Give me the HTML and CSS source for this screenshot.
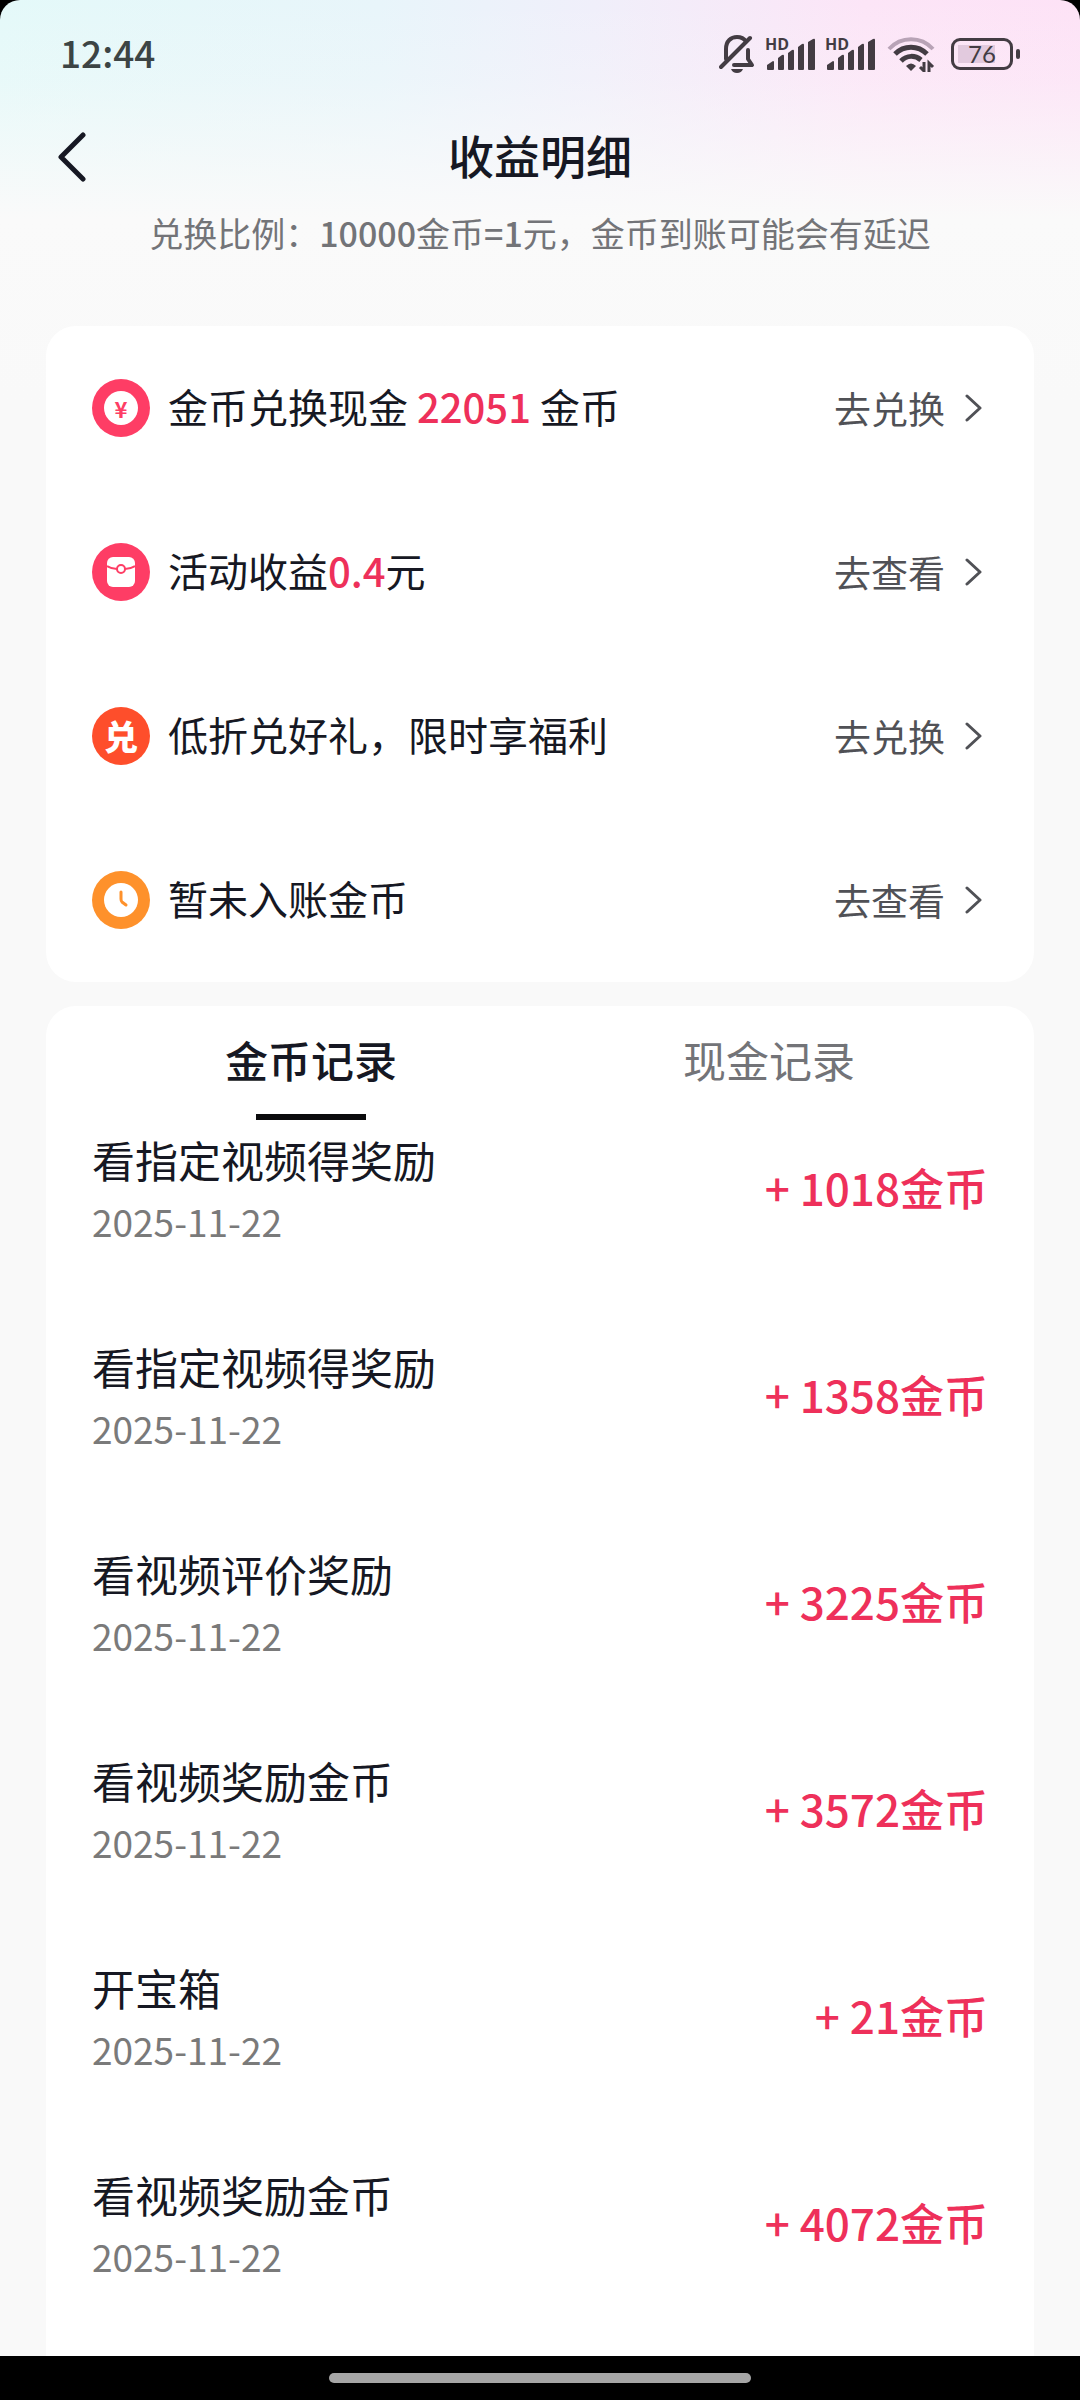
FILE: index.html
```html
<!DOCTYPE html>
<html lang="zh-CN">
<head>
    <meta charset="UTF-8">
    <meta name="viewport" content="width=device-width, initial-scale=1.0">
    <title>收益明细</title>
    <link rel="stylesheet" href="styles.css">
</head>
<body>
    <div class="screen">
        <div class="status-bar">
            <span class="time">12:44</span>
            <div class="status-icons">
                <svg class="bell" width="36" height="38" viewBox="0 0 36 38" fill="none" stroke="#433c43" stroke-width="4" stroke-linecap="round">
                    <path d="M7 24V14C7 6 12 2 18 2c4 0 7 1.500 9 4.500M29 15v9l4 6H15" stroke-linejoin="round"/>
                    <path d="M2 32L31 3"/>
                    <path d="M12 34h12c-1 2.500-3 4-6 4s-5-1.500-6-4z" fill="#433c43" stroke="none"/>
                </svg>
                <div class="signal">
                    <span class="hd">HD</span>
                    <svg width="48" height="32" viewBox="0 0 48 32" fill="#433c43">
                        <path d="M0 27l6-4q1 0 1 1v7q0 1-1 1H1q-1 0-1-1zM11 20l4-3q2-1 2 1v13q0 1-1 1h-4q-1 0-1-1zM21 15l4-3q2-1 2 1v18q0 1-1 1h-4q-1 0-1-1zM31 9l4-3q2-1 2 1v24q0 1-1 1h-4q-1 0-1-1zM41 4l5-3q2-1 2 1v29q0 1-1 1h-5q-1 0-1-1z"/>
                    </svg>
                </div>
                <div class="signal">
                    <span class="hd">HD</span>
                    <svg width="48" height="32" viewBox="0 0 48 32" fill="#433c43">
                        <path d="M0 27l6-4q1 0 1 1v7q0 1-1 1H1q-1 0-1-1zM11 20l4-3q2-1 2 1v13q0 1-1 1h-4q-1 0-1-1zM21 15l4-3q2-1 2 1v18q0 1-1 1h-4q-1 0-1-1zM31 9l4-3q2-1 2 1v24q0 1-1 1h-4q-1 0-1-1zM41 4l5-3q2-1 2 1v29q0 1-1 1h-5q-1 0-1-1z"/>
                    </svg>
                </div>
                <svg class="wifi" width="48" height="36" viewBox="0 0 48 36" fill="none" stroke="#433c43" stroke-width="5">
                    <path d="M2 13C14 0 34 0 46 13" stroke="#b8a3b6" stroke-width="4"/>
                    <path d="M8 18C17 9 31 9 40 18"/>
                    <path d="M14 25C20 19 28 19 34 24"/>
                    <path d="M19 30q5-5 10 0l-5 5z" fill="#433c43" stroke="none"/>
                    <path d="M37 26v9l-4-4M42 36v-9l4 4" stroke-width="3"/>
                </svg>
                <div class="battery"><span class="battery-body">76</span></div>
            </div>
        </div>

        <header class="header">
            <button class="back" type="button" aria-label="返回">
                <svg width="28" height="50" viewBox="0 0 28 50" fill="none" stroke="#161823" stroke-width="5" stroke-linecap="round" stroke-linejoin="round">
                    <path d="M25 3L3 25l22 22"/>
                </svg>
            </button>
            <h1>收益明细</h1>
        </header>
        <p class="rate">兑换比例：<b>10000</b>金币<b>=1</b>元，金币到账可能会有延迟</p>

        <section class="card">
            <div class="entry">
                <span class="icon pink"><span class="coin">¥</span></span>
                <span class="label">金币兑换现金 <em>22051</em> 金币</span>
                <a class="action" href="#">去兑换
                    <svg width="17" height="28" viewBox="0 0 17 28"><path d="M2 2l13 12L2 26"/></svg>
                </a>
            </div>
            <div class="entry">
                <span class="icon pink">
                    <svg width="28" height="30" viewBox="0 0 28 30">
                        <rect width="28" height="30" rx="6" fill="#fff"/>
                        <path d="M0 9q5 3 10 3M18 12q5 0 10-3" fill="none" stroke="#fe3d65" stroke-width="2"/>
                        <circle cx="14" cy="12" r="4" fill="#fff" stroke="#fe3d65" stroke-width="2"/>
                    </svg>
                </span>
                <span class="label">活动收益<em>0.4</em>元</span>
                <a class="action" href="#">去查看
                    <svg width="17" height="28" viewBox="0 0 17 28"><path d="M2 2l13 12L2 26"/></svg>
                </a>
            </div>
            <div class="entry">
                <span class="icon red">兑</span>
                <span class="label">低折兑好礼，限时享福利</span>
                <a class="action" href="#">去兑换
                    <svg width="17" height="28" viewBox="0 0 17 28"><path d="M2 2l13 12L2 26"/></svg>
                </a>
            </div>
            <div class="entry">
                <span class="icon orange">
                    <svg width="34" height="34" viewBox="0 0 34 34">
                        <circle cx="17" cy="17" r="17" fill="#fff"/>
                        <path d="M17 9v7q0 2 1 3l4 3" fill="none" stroke="#fe912b" stroke-width="3" stroke-linecap="round"/>
                    </svg>
                </span>
                <span class="label">暂未入账金币</span>
                <a class="action" href="#">去查看
                    <svg width="17" height="28" viewBox="0 0 17 28"><path d="M2 2l13 12L2 26"/></svg>
                </a>
            </div>
        </section>

        <section class="card records">
            <div class="tabs">
                <button class="tab active" type="button">金币记录</button>
                <button class="tab" type="button">现金记录</button>
            </div>
            <ul class="list">
                <li class="record">
                    <div>
                        <div class="name">看指定视频得奖励</div>
                        <div class="date">2025-11-22</div>
                    </div>
                    <span class="amount">+ 1018金币</span>
                </li>
                <li class="record">
                    <div>
                        <div class="name">看指定视频得奖励</div>
                        <div class="date">2025-11-22</div>
                    </div>
                    <span class="amount">+ 1358金币</span>
                </li>
                <li class="record">
                    <div>
                        <div class="name">看视频评价奖励</div>
                        <div class="date">2025-11-22</div>
                    </div>
                    <span class="amount">+ 3225金币</span>
                </li>
                <li class="record">
                    <div>
                        <div class="name">看视频奖励金币</div>
                        <div class="date">2025-11-22</div>
                    </div>
                    <span class="amount">+ 3572金币</span>
                </li>
                <li class="record">
                    <div>
                        <div class="name">开宝箱</div>
                        <div class="date">2025-11-22</div>
                    </div>
                    <span class="amount">+ 21金币</span>
                </li>
                <li class="record">
                    <div>
                        <div class="name">看视频奖励金币</div>
                        <div class="date">2025-11-22</div>
                    </div>
                    <span class="amount">+ 4072金币</span>
                </li>
            </ul>
        </section>
    </div>
    <div class="nav-bar"><div class="handle"></div></div>
</body>
</html>
```
FILE: styles.css
```css
* {
    box-sizing: border-box;
}

body {
    margin: 0;
    min-height: 100vh;
    display: flex;
    flex-direction: column;
    background-color: #000;
    color: #161823;
    font-family: "Noto Sans CJK SC", sans-serif;
}

button {
    padding: 0;
    border: none;
    background: none;
    color: inherit;
    font: inherit;
}

.screen {
    flex: 1;
    display: flex;
    flex-direction: column;
    border-radius: 20px 20px 0 0;
    background:
        linear-gradient(to bottom, rgba(250, 250, 250, 0) 0, rgba(250, 250, 250, 0.2) 80px, #fafafa 220px, #f9f9f9 400px),
        linear-gradient(to right, #e4f9f9 0%, #e8f5fa 35%, #f0effa 55%, #fce5f7 80%, #fde2f6 100%);
}

/* status bar */
.status-bar {
    display: flex;
    justify-content: space-between;
    align-items: center;
    height: 108px;
    padding: 0 60px;
}

.time {
    padding-bottom: 4px;
    font-size: 37px;
    font-weight: 500;
    color: #3c4444;
}

.status-icons {
    display: flex;
    align-items: center;
    gap: 12px;
}

.signal {
    position: relative;
    display: flex;
}

.hd {
    position: absolute;
    top: -4px;
    left: -2px;
    font-family: "Open Sans", sans-serif;
    font-size: 16px;
    font-weight: 700;
    line-height: 20px;
    color: #433c43;
}

.battery {
    display: flex;
    align-items: center;
    gap: 3px;
    margin-left: 4px;
}

.battery-body {
    width: 62px;
    height: 32px;
    border: 3px solid #433c43;
    border-radius: 9px;
    background: linear-gradient(#e2cade, #e2cade) 4px center / 37px 18px no-repeat;
    font-family: Lato, sans-serif;
    font-size: 24px;
    line-height: 26px;
    text-align: center;
    color: #433c43;
}

.battery::after {
    content: "";
    width: 4px;
    height: 10px;
    border-radius: 2px;
    background-color: #433c43;
}

/* title */
.header {
    display: grid;
    grid-template-columns: 28px 1fr 28px;
    align-items: center;
    height: 98px;
    padding: 0 58px;
}

.back {
    display: flex;
}

h1 {
    margin: 0;
    padding-bottom: 6px;
    font-size: 46px;
    font-weight: 500;
    line-height: 64px;
    text-align: center;
}

.rate {
    margin: 0 0 66px;
    font-size: 34px;
    line-height: 54px;
    text-align: center;
    color: #737478;
}

.rate b {
    font-weight: 500;
}

/* cards */
.card {
    margin: 0 46px 24px;
    border-radius: 30px;
    background-color: #fff;
}

.entry {
    display: flex;
    align-items: center;
    height: 164px;
    padding: 0 52px 0 46px;
}

.icon {
    display: flex;
    justify-content: center;
    align-items: center;
    width: 58px;
    height: 58px;
    margin-right: 18px;
    border-radius: 50%;
    color: #fff;
    font-size: 34px;
    font-weight: 900;
    line-height: 54px;
}

.pink {
    background-color: #fe3d65;
}

.red {
    background-color: #fe4e2b;
}

.orange {
    background-color: #fe912b;
}

.coin {
    width: 34px;
    height: 34px;
    border-radius: 50%;
    background-color: #fff;
    color: #fe3d65;
    font-size: 22px;
    font-weight: 700;
    line-height: 34px;
    text-align: center;
}

.label {
    flex: 1;
    padding-bottom: 4px;
    font-size: 40px;
}

.label em {
    font-style: normal;
    font-weight: 500;
    color: #ee305a;
}

.action {
    display: flex;
    align-items: center;
    gap: 20px;
    font-size: 37px;
    line-height: 54px;
    color: #505156;
    text-decoration: none;
}

.action svg {
    fill: none;
    stroke: #505156;
    stroke-width: 3;
    stroke-linecap: round;
    stroke-linejoin: round;
}

/* records */
.records {
    flex: 1;
    margin-bottom: 0;
    border-radius: 30px 30px 0 0;
}

.tabs {
    display: flex;
    padding: 0 36px;
}

.tab {
    flex: 1;
    font-size: 43px;
    line-height: 106px;
    color: #737478;
}

.tab::after {
    content: "";
    display: block;
    width: 110px;
    height: 6px;
    margin: 2px auto 0;
}

.active {
    font-weight: 500;
    color: #161823;
}

.active::after {
    background-color: #0b0b0d;
}

.list {
    display: flex;
    flex-direction: column;
    gap: 83px;
    margin: 0;
    padding: 8px 46px 60px;
    list-style: none;
}

.record {
    display: flex;
    justify-content: space-between;
    align-items: center;
}

.name {
    font-size: 43px;
    line-height: 62px;
}

.date {
    font-size: 37px;
    line-height: 62px;
    color: #7a7a7a;
}

.amount {
    padding-bottom: 6px;
    font-size: 44px;
    font-weight: 500;
    color: #ee305a;
}

/* system navigation */
.nav-bar {
    display: flex;
    justify-content: center;
    align-items: center;
    height: 44px;
}

.handle {
    width: 39%;
    height: 10px;
    border-radius: 5px;
    background-color: #a6a6a6;
}
```
